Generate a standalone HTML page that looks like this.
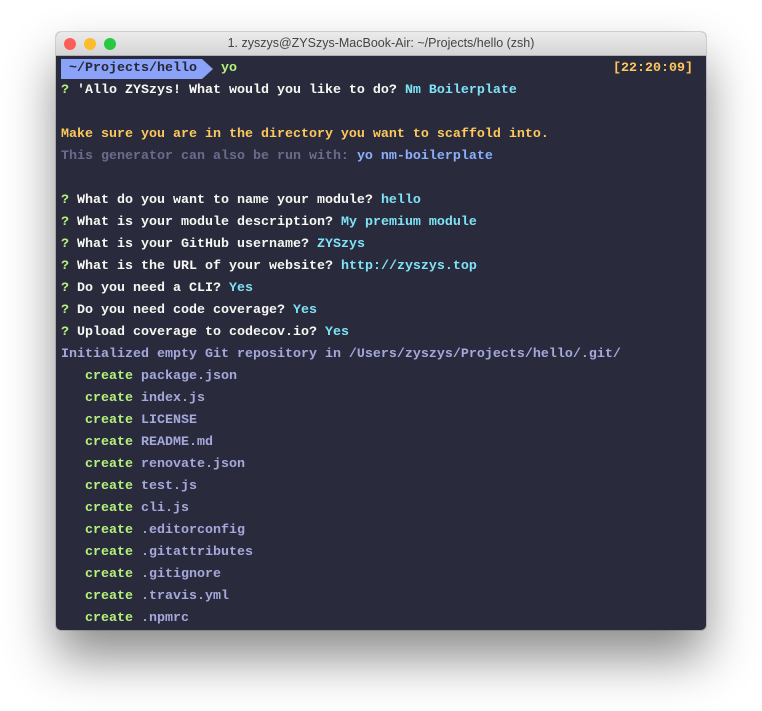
<!DOCTYPE html>
<html><head><style>
html,body{margin:0;padding:0;background:#fff;width:762px;height:711px;overflow:hidden}
.win{position:absolute;left:56px;top:32px;width:650px;height:598px;border-radius:5px;overflow:hidden;box-shadow:0 28px 50px rgba(0,0,0,.45),0 0 0 1px rgba(0,0,0,.15);background:#292b3d}
.tb{height:23px;background:linear-gradient(#ebebeb,#d5d5d5);border-bottom:1px solid #b0b0b0;position:relative;font:12.5px "Liberation Sans",sans-serif;color:#444;text-align:center;line-height:23px}
.dot{position:absolute;top:6px;width:12px;height:12px;border-radius:50%}
.term{position:relative;padding:2px 0 0 5px;font:bold 13.33px/22px "Liberation Mono",monospace;color:#f8f8f2;white-space:pre}
.l{height:22px}
.g{color:#b4f27c}.c{color:#7fe3f5}.y{color:#ffc85a}.d{color:#6a6c8e}.p{color:#a6a8dc}.b{color:#8cb0ff}
.pr{background:#8aa2f8;color:#262838;display:inline-block;line-height:20px;padding:0 5px 0 8px;position:relative;margin-right:19px;vertical-align:top;margin-top:1px}
.pr:after{content:"";position:absolute;right:-11px;top:0;border-left:11px solid #8aa2f8;border-top:10px solid transparent;border-bottom:10px solid transparent}
.t{position:absolute;right:13px;top:2px}
</style></head><body>
<div class="win">
<div class="tb"><div class="dot" style="left:8px;background:#fc5f57"></div><div class="dot" style="left:28px;background:#fdbc2e"></div><div class="dot" style="left:48px;background:#28c840"></div>1. zyszys@ZYSzys-MacBook-Air: ~/Projects/hello (zsh)</div>
<div class="term"><span class="t y">[22:20:09]</span><div class="l"><span class="pr">~/Projects/hello</span><span class="g">yo</span></div><div class="l"><span class="g">?</span> 'Allo ZYSzys! What would you like to do? <span class="c">Nm Boilerplate</span></div><div class="l"></div><div class="l y">Make sure you are in the directory you want to scaffold into.</div><div class="l"><span class="d">This generator can also be run with: </span><span class="b">yo nm-boilerplate</span></div><div class="l"></div><div class="l"><span class="g">?</span> What do you want to name your module? <span class="c">hello</span></div><div class="l"><span class="g">?</span> What is your module description? <span class="c">My premium module</span></div><div class="l"><span class="g">?</span> What is your GitHub username? <span class="c">ZYSzys</span></div><div class="l"><span class="g">?</span> What is the URL of your website? <span class="c">http://zyszys.top</span></div><div class="l"><span class="g">?</span> Do you need a CLI? <span class="c">Yes</span></div><div class="l"><span class="g">?</span> Do you need code coverage? <span class="c">Yes</span></div><div class="l"><span class="g">?</span> Upload coverage to codecov.io? <span class="c">Yes</span></div><div class="l p">Initialized empty Git repository in /Users/zyszys/Projects/hello/.git/</div><div class="l">   <span class="g">create</span> <span class="p">package.json</span></div><div class="l">   <span class="g">create</span> <span class="p">index.js</span></div><div class="l">   <span class="g">create</span> <span class="p">LICENSE</span></div><div class="l">   <span class="g">create</span> <span class="p">README.md</span></div><div class="l">   <span class="g">create</span> <span class="p">renovate.json</span></div><div class="l">   <span class="g">create</span> <span class="p">test.js</span></div><div class="l">   <span class="g">create</span> <span class="p">cli.js</span></div><div class="l">   <span class="g">create</span> <span class="p">.editorconfig</span></div><div class="l">   <span class="g">create</span> <span class="p">.gitattributes</span></div><div class="l">   <span class="g">create</span> <span class="p">.gitignore</span></div><div class="l">   <span class="g">create</span> <span class="p">.travis.yml</span></div><div class="l">   <span class="g">create</span> <span class="p">.npmrc</span></div></div>
</div>
</body></html>
